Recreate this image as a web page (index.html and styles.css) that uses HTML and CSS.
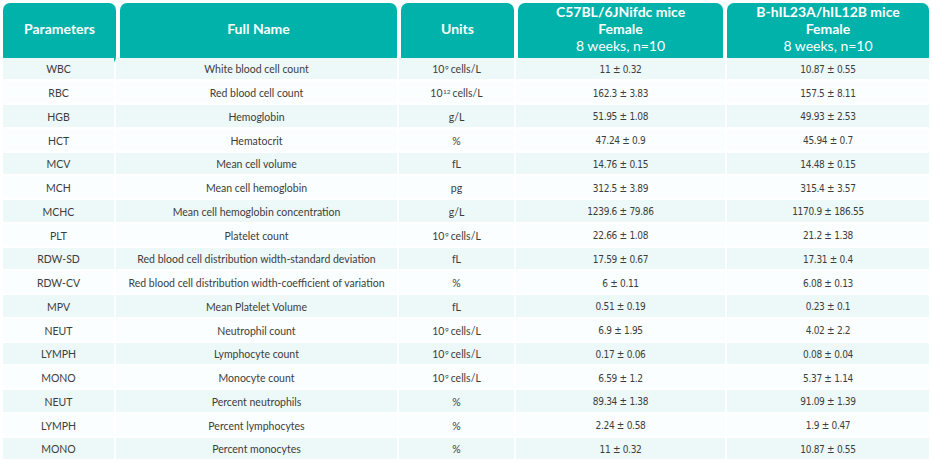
FILE: index.html
```html
<!DOCTYPE html>
<html lang="en">
<head>
<meta charset="utf-8">
<title>Hematology parameters</title>
<link rel="stylesheet" href="styles.css">
</head>
<body>
<div class="table">
  <div class="head">
    <div class="hcell">Parameters</div>
    <div class="hcell">Full Name</div>
    <div class="hcell">Units</div>
    <div class="hcell"><span>C57BL/6JNifdc mice</span><span>Female</span><span class="reg">8 weeks, n=10</span></div>
    <div class="hcell"><span>B-hIL23A/hIL12B mice</span><span>Female</span><span class="reg">8 weeks, n=10</span></div>
  </div>
  <div class="body">
    <div class="row"><div>WBC</div><div>White blood cell count</div><div>10<sup>9</sup> cells/L</div><div class="num">11 ± 0.32</div><div class="num">10.87 ± 0.55</div></div>
    <div class="row"><div>RBC</div><div>Red blood cell count</div><div>10<sup>12</sup> cells/L</div><div class="num">162.3 ± 3.83</div><div class="num">157.5 ± 8.11</div></div>
    <div class="row"><div>HGB</div><div>Hemoglobin</div><div>g/L</div><div class="num">51.95 ± 1.08</div><div class="num">49.93 ± 2.53</div></div>
    <div class="row"><div>HCT</div><div>Hematocrit</div><div>%</div><div class="num">47.24 ± 0.9</div><div class="num">45.94 ± 0.7</div></div>
    <div class="row"><div>MCV</div><div>Mean cell volume</div><div>fL</div><div class="num">14.76 ± 0.15</div><div class="num">14.48 ± 0.15</div></div>
    <div class="row"><div>MCH</div><div>Mean cell hemoglobin</div><div>pg</div><div class="num">312.5 ± 3.89</div><div class="num">315.4 ± 3.57</div></div>
    <div class="row"><div>MCHC</div><div>Mean cell hemoglobin concentration</div><div>g/L</div><div class="num">1239.6 ± 79.86</div><div class="num">1170.9 ± 186.55</div></div>
    <div class="row"><div>PLT</div><div>Platelet count</div><div>10<sup>9</sup> cells/L</div><div class="num">22.66 ± 1.08</div><div class="num">21.2 ± 1.38</div></div>
    <div class="row"><div>RDW-SD</div><div>Red blood cell distribution width-standard deviation</div><div>fL</div><div class="num">17.59 ± 0.67</div><div class="num">17.31 ± 0.4</div></div>
    <div class="row"><div>RDW-CV</div><div>Red blood cell distribution width-coefficient of variation</div><div>%</div><div class="num">6 ± 0.11</div><div class="num">6.08 ± 0.13</div></div>
    <div class="row"><div>MPV</div><div>Mean Platelet Volume</div><div>fL</div><div class="num">0.51 ± 0.19</div><div class="num">0.23 ± 0.1</div></div>
    <div class="row"><div>NEUT</div><div>Neutrophil count</div><div>10<sup>9</sup> cells/L</div><div class="num">6.9 ± 1.95</div><div class="num">4.02 ± 2.2</div></div>
    <div class="row"><div>LYMPH</div><div>Lymphocyte count</div><div>10<sup>9</sup> cells/L</div><div class="num">0.17 ± 0.06</div><div class="num">0.08 ± 0.04</div></div>
    <div class="row"><div>MONO</div><div>Monocyte count</div><div>10<sup>9</sup> cells/L</div><div class="num">6.59 ± 1.2</div><div class="num">5.37 ± 1.14</div></div>
    <div class="row"><div>NEUT</div><div>Percent neutrophils</div><div>%</div><div class="num">89.34 ± 1.38</div><div class="num">91.09 ± 1.39</div></div>
    <div class="row"><div>LYMPH</div><div>Percent lymphocytes</div><div>%</div><div class="num">2.24 ± 0.58</div><div class="num">1.9 ± 0.47</div></div>
    <div class="row"><div>MONO</div><div>Percent monocytes</div><div>%</div><div class="num">11 ± 0.32</div><div class="num">10.87 ± 0.55</div></div>
  </div>
</div>
</body>
</html>
```
FILE: styles.css
```css
html, body {
  margin: 0;
  padding: 0;
  background: #ffffff;
}

.table {
  padding: 3px 3px 0 3px;
  width: 926px;
  font-family: Lato, "Noto Sans", sans-serif;
  color: #3d3d3d;
}

.head {
  display: grid;
  grid-template-columns: 113px 277px 113px 205px 202px;
  column-gap: 4px;
  height: 48px;
}

.hcell {
  background: #00b2aa;
  color: #ffffff;
  border-radius: 7px;
  font-weight: 700;
  font-size: 14px;
  line-height: 17px;
  display: flex;
  flex-direction: column;
  align-items: center;
  justify-content: center;
  text-align: center;
  padding-bottom: 10px;
  box-sizing: border-box;
}

.hcell .reg {
  font-weight: 400;
}

.body {
  margin-top: 6.5px;
  display: flex;
  flex-direction: column;
  row-gap: 2px;
}

.row {
  display: grid;
  grid-template-columns: 111px 281px 115px 209px 202px;
  column-gap: 2px;
  height: 21.75px;
}

.row > div {
  display: flex;
  align-items: center;
  justify-content: center;
  font-size: 10.5px;
  white-space: nowrap;
  padding-top: 2px;
  box-sizing: border-box;
}

.row:nth-child(odd) > div {
  background: #edf8f8;
}

.row:nth-child(even) > div {
  background: #fafefe;
}

.row sup {
  font-size: 6.5px;
  line-height: 0;
  position: relative;
  top: -1px;
  vertical-align: super;
  margin-left: 0.5px;
  margin-right: 2px;
}

.row > .num {
  font-family: "DejaVu Sans Condensed", "DejaVu Sans", sans-serif;
  font-size: 10px;
  letter-spacing: -0.3px;
}
```
